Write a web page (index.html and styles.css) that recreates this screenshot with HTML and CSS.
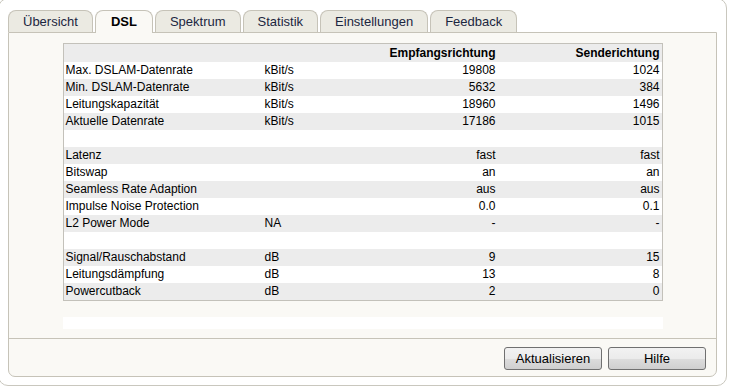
FILE: index.html
```html
<!DOCTYPE html>
<html lang="de">
<head>
    <meta charset="UTF-8">
    <meta name="viewport" content="width=device-width, initial-scale=1.0">
    <title>DSL-Informationen</title>
    <link rel="stylesheet" href="styles.css">
</head>
<body>

<div class="frame">
    <div class="tabs">
        <div class="tab">Übersicht</div>
        <div class="tab active">DSL</div>
        <div class="tab">Spektrum</div>
        <div class="tab">Statistik</div>
        <div class="tab">Einstellungen</div>
        <div class="tab">Feedback</div>
    </div>

    <div class="panel">
        <div class="content">
            <div class="table-box">
                <table class="dsl">
                    <colgroup>
                        <col class="c-label">
                        <col class="c-unit">
                        <col class="c-rx">
                        <col class="c-tx">
                    </colgroup>
                    <tr class="head"><td></td><td></td><td class="num">Empfangsrichtung</td><td class="num">Senderichtung</td></tr>
                    <tr><td>Max. DSLAM-Datenrate</td><td>kBit/s</td><td class="num">19808</td><td class="num">1024</td></tr>
                    <tr><td>Min. DSLAM-Datenrate</td><td>kBit/s</td><td class="num">5632</td><td class="num">384</td></tr>
                    <tr><td>Leitungskapazität</td><td>kBit/s</td><td class="num">18960</td><td class="num">1496</td></tr>
                    <tr><td>Aktuelle Datenrate</td><td>kBit/s</td><td class="num">17186</td><td class="num">1015</td></tr>
                    <tr><td></td><td></td><td></td><td></td></tr>
                    <tr><td>Latenz</td><td></td><td class="num">fast</td><td class="num">fast</td></tr>
                    <tr><td>Bitswap</td><td></td><td class="num">an</td><td class="num">an</td></tr>
                    <tr><td>Seamless Rate Adaption</td><td></td><td class="num">aus</td><td class="num">aus</td></tr>
                    <tr><td>Impulse Noise Protection</td><td></td><td class="num">0.0</td><td class="num">0.1</td></tr>
                    <tr><td>L2 Power Mode</td><td>NA</td><td class="num">-</td><td class="num">-</td></tr>
                    <tr><td></td><td></td><td></td><td></td></tr>
                    <tr><td>Signal/Rauschabstand</td><td>dB</td><td class="num">9</td><td class="num">15</td></tr>
                    <tr><td>Leitungsdämpfung</td><td>dB</td><td class="num">13</td><td class="num">8</td></tr>
                    <tr><td>Powercutback</td><td>dB</td><td class="num">2</td><td class="num">0</td></tr>
                </table>
            </div>
            <div class="strip"></div>
        </div>

        <div class="footer">
            <button class="btn">Aktualisieren</button>
            <button class="btn">Hilfe</button>
        </div>
    </div>
</div>

</body>
</html>
```

FILE: styles.css
```css
body {
    margin: 0;
    background: white;
    font-family: Arial, "Liberation Sans", sans-serif;
    font-size: 12px;
    color: #000;
}
.frame {
    width: 709px;
    margin: -2px 0 0 -2px;
    padding: 11px 9px 8px 9px;
    border: 1px solid #c9c7be;
    border-radius: 10px;
}
.tabs {
    display: flex;
    align-items: flex-start;
    gap: 2px;
    height: 23px;
    margin-bottom: -1px;
    position: relative;
    z-index: 1;
}
.tab {
    height: 21px;
    line-height: 21px;
    padding: 0 14px;
    border: 1px solid #c6c3b8;
    border-bottom: none;
    border-radius: 8px 8px 0 0;
    background: #ebeae2;
    font-size: 13px;
    color: #1b2640;
}
.tab.active {
    height: 22px;
    background: #faf9f5;
    font-weight: bold;
    color: #000;
    padding: 0 15px;
}
.panel {
    background: #faf9f5;
    border: 1px solid #c6c3b8;
    border-radius: 0 0 7px 7px;
}
.content {
    padding: 10px 0 9px;
}
.table-box {
    width: 600px;
    margin: 0 auto;
    border: 1px solid #c3c1ba;
    box-sizing: border-box;
    background: white;
}
.dsl {
    width: 100%;
    border-collapse: collapse;
    table-layout: fixed;
}
.c-label { width: 199px; }
.c-unit { width: 120px; }
.c-rx { width: 116px; }
.c-tx { width: 163px; }
.dsl td {
    height: 17px;
    padding: 0 0 0 2px;
    white-space: nowrap;
    line-height: 17px;
}
.dsl td.num {
    text-align: right;
    padding: 0 3px 0 0;
}
.dsl tr:nth-child(odd) {
    background: #ececec;
}
.dsl tr.head td {
    height: 18px;
    font-weight: bold;
}
.dsl td.num:last-child {
    padding-right: 2px;
}
.strip {
    width: 600px;
    height: 12px;
    margin: 16px auto 0;
    background: white;
}
.footer {
    display: flex;
    justify-content: flex-end;
    gap: 6px;
    padding: 8px 10px 6px;
    border-top: 1px solid #c6c3b8;
}
.btn {
    width: 98px;
    height: 23px;
    border: 1px solid #707070;
    border-radius: 3px;
    background: linear-gradient(to bottom, #f2f2f2 0%, #ebebeb 50%, #dddddd 51%, #cfcfcf 100%);
    font-family: Arial, "Liberation Sans", sans-serif;
    font-size: 13px;
    color: #000;
    padding: 0;
}
```
